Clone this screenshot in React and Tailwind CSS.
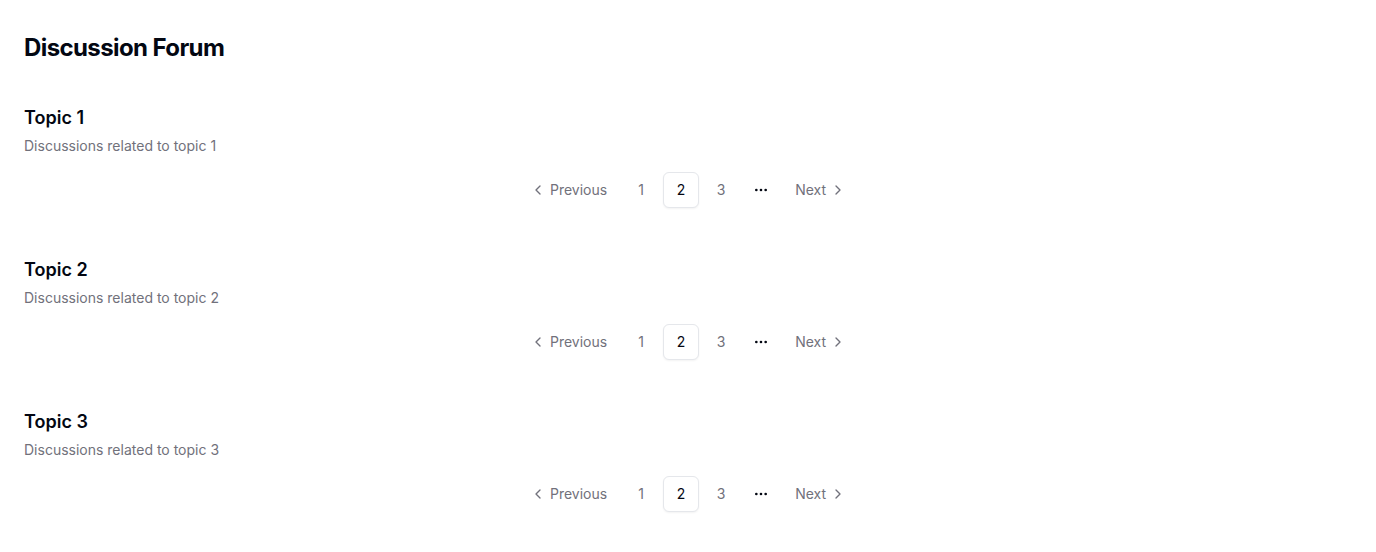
import { ChevronLeft, ChevronRight, MoreHorizontal } from "lucide-react";

const topics = [1, 2, 3];

const Pager = () => (
  <nav className="mx-auto flex w-full justify-center">
    <ul className="flex flex-row items-center gap-1">
      <li>
        <a href="#" className="flex h-9 items-center gap-1 rounded-md pl-2.5 pr-3 text-sm text-zinc-500">
          <ChevronLeft className="h-4 w-4" />
          <span>Previous</span>
        </a>
      </li>
      <li>
        <a href="#" className="flex h-9 w-9 items-center justify-center rounded-md text-sm text-zinc-500">1</a>
      </li>
      <li>
        <a href="#" className="flex h-9 w-9 items-center justify-center rounded-md border border-gray-200 bg-white text-sm text-gray-950 shadow-xs">2</a>
      </li>
      <li>
        <a href="#" className="flex h-9 w-9 items-center justify-center rounded-md text-sm text-zinc-500">3</a>
      </li>
      <li>
        <span className="flex h-9 w-9 items-center justify-center text-gray-950">
          <MoreHorizontal className="h-4 w-4" />
        </span>
      </li>
      <li>
        <a href="#" className="flex h-9 items-center gap-1 rounded-md pl-3 pr-2.5 text-sm text-zinc-500">
          <span>Next</span>
          <ChevronRight className="h-4 w-4" />
        </a>
      </li>
    </ul>
  </nav>
);

export default function App() {
  return (
    <div className="min-h-screen bg-white px-6 pt-8 font-['Inter',sans-serif] text-gray-950">
      <h1 className="mb-10 text-2xl font-bold tracking-tight">Discussion Forum</h1>
      <div className="flex flex-col gap-12">
        {topics.map((t) => (
          <div key={t}>
            <h2 className="text-lg font-semibold">Topic {t}</h2>
            <p className="mt-1 text-sm text-zinc-500">Discussions related to topic {t}</p>
            <div className="mt-4">
              <Pager />
            </div>
          </div>
        ))}
      </div>
    </div>
  );
}
